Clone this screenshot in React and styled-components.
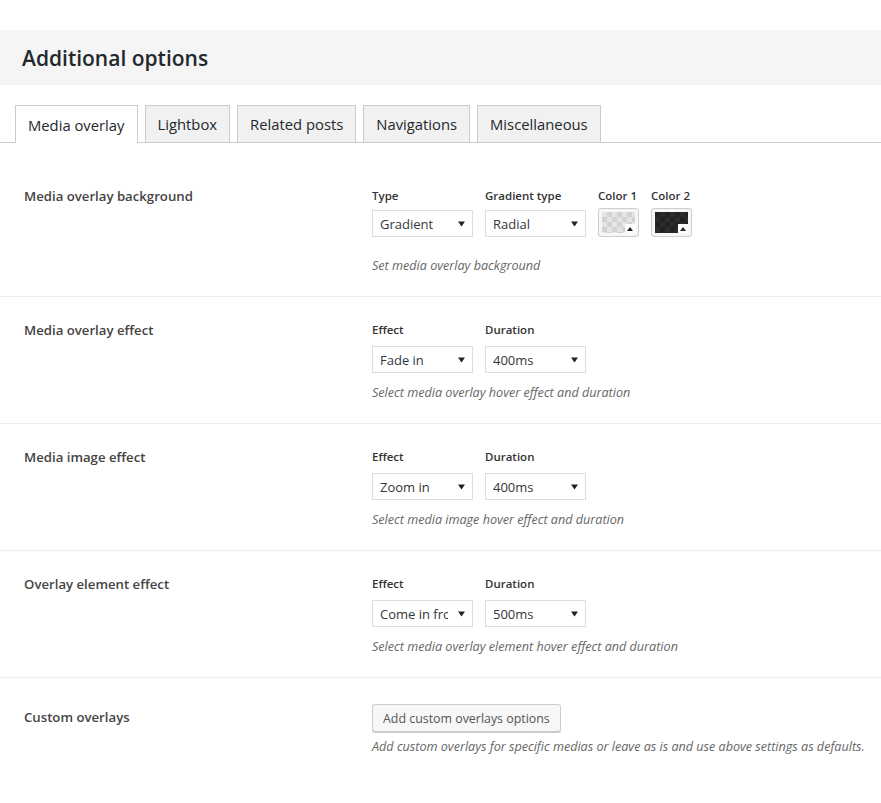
import React from 'react';
import styled, { createGlobalStyle } from 'styled-components';

const GlobalStyle = createGlobalStyle`
    *, *::before, *::after {
        box-sizing: border-box;
    }
    body {
        margin: 0;
        background: #fff;
        font-family: "Open Sans", "Noto Sans", sans-serif;
        color: #444;
    }
`;

const Page = styled.div`
    padding-top: 30px;
`;

const Header = styled.h2`
    margin: 0;
    height: 55px;
    display: flex;
    align-items: center;
    padding-left: 22px;
    background: #f5f5f5;
    font-size: 21px;
    font-weight: 600;
    color: #23282d;
`;

const TabBar = styled.div`
    display: flex;
    gap: 7px;
    margin-top: 20px;
    padding-left: 15px;
    border-bottom: 1px solid #ccc;
`;

const Tab = styled.div`
    display: flex;
    align-items: center;
    padding: 0 12px;
    border: 1px solid #ccc;
    border-bottom: none;
    margin-bottom: ${p => (p.$active ? '-1px' : '0')};
    background: ${p => (p.$active ? '#fff' : '#f1f1f1')};
    height: ${p => (p.$active ? '38px' : '37px')};
    font-size: 14.8px;
    color: #23282d;
`;

const Rows = styled.div`
    padding-top: 20px;
`;

const Row = styled.div`
    display: grid;
    grid-template-columns: 348px 1fr;
    padding: ${p => p.$top || 24}px 0 ${p => p.$bottom || 21}px 24px;
    border-bottom: ${p => (p.$last ? 'none' : '1px solid #eee')};
`;

const RowLabel = styled.div`
    font-size: 13.2px;
    font-weight: 600;
    line-height: 18px;
    color: #444;
    padding-top: ${p => p.$offset || 0}px;
`;

const Fields = styled.div`
    display: flex;
    gap: 12px;
`;

const Field = styled.div`
    display: flex;
    flex-direction: column;
    gap: ${p => p.$gap || 7}px;
`;

const FieldLabel = styled.div`
    font-size: 11.5px;
    font-weight: 600;
    line-height: 18px;
    color: #333;
`;

const SelectBox = styled.div`
    width: 101px;
    height: 27px;
    display: flex;
    align-items: center;
    border: 1px solid #ddd;
    background: #fff;
    padding: 0 7px 0 7px;
    font-size: 13px;
    color: #32373c;
`;

const SelectText = styled.span`
    flex: 1;
    overflow: hidden;
    white-space: nowrap;
    margin-right: 10px;
`;

const Swatch = styled.div`
    position: relative;
    width: 41px;
    height: 29px;
    padding: 3px;
    border: 1px solid #ccc;
    border-radius: 3px;
    background: #f7f7f7;
`;

const SwatchFill = styled.div`
    width: 100%;
    height: 100%;
    background-color: ${p => (p.$dark ? '#222' : '#e4e4e4')};
    background-image:
        linear-gradient(45deg, ${p => (p.$dark ? '#2c2c2c' : '#d2d2d2')} 25%, transparent 25%, transparent 75%, ${p => (p.$dark ? '#2c2c2c' : '#d2d2d2')} 75%),
        linear-gradient(45deg, ${p => (p.$dark ? '#2c2c2c' : '#d2d2d2')} 25%, transparent 25%, transparent 75%, ${p => (p.$dark ? '#2c2c2c' : '#d2d2d2')} 75%);
    background-size: 10px 10px;
    background-position: 0 0, 5px 5px;
`;

const SwatchToggle = styled.div`
    position: absolute;
    right: 3px;
    bottom: 3px;
    width: 10px;
    height: 9px;
    background: #fff;
    display: flex;
    align-items: center;
    justify-content: center;
`;

const Description = styled.p`
    margin: ${p => p.$gap || 11}px 0 0;
    font-size: 12.6px;
    font-style: italic;
    line-height: 18px;
    color: #666;
`;

const Button = styled.button`
    height: 28px;
    padding: 0 10px;
    border: 1px solid #ccc;
    border-radius: 3px;
    background: #f7f7f7;
    box-shadow: 0 1px 0 #ccc;
    font-family: inherit;
    font-size: 12.4px;
    color: #555;
`;

const Arrow = () => (
    <svg width="7" height="6" viewBox="0 0 7 6">
        <path d="M0 0.5 L7 0.5 L3.5 5.5 Z" fill="#222" />
    </svg>
);

const Select = ({ value }) => (
    <SelectBox>
        <SelectText>{value}</SelectText>
        <Arrow />
    </SelectBox>
);

const ColorPicker = ({ dark }) => (
    <Swatch>
        <SwatchFill $dark={dark} />
        <SwatchToggle>
            <svg width="6" height="4" viewBox="0 0 6 4">
                <path d="M0 4 L3 0 L6 4 Z" fill="#222" />
            </svg>
        </SwatchToggle>
    </Swatch>
);

const effectRows = [
    { label: 'Media overlay effect', effect: 'Fade in', duration: '400ms', desc: 'Select media overlay hover effect and duration' },
    { label: 'Media image effect', effect: 'Zoom in', duration: '400ms', desc: 'Select media image hover effect and duration' },
    { label: 'Overlay element effect', effect: 'Come in from bottom', duration: '500ms', desc: 'Select media overlay element hover effect and duration' },
];

const tabs = ['Media overlay', 'Lightbox', 'Related posts', 'Navigations', 'Miscellaneous'];

export default function App() {
    return (
        <Page>
            <GlobalStyle />
            <Header>Additional options</Header>
            <TabBar>
                {tabs.map((t, i) => (
                    <Tab key={t} $active={i === 0}>{t}</Tab>
                ))}
            </TabBar>
            <Rows>
                <Row>
                    <RowLabel>Media overlay background</RowLabel>
                    <div>
                        <Fields>
                            <Field $gap={5}>
                                <FieldLabel>Type</FieldLabel>
                                <Select value="Gradient" />
                            </Field>
                            <Field $gap={5}>
                                <FieldLabel>Gradient type</FieldLabel>
                                <Select value="Radial" />
                            </Field>
                            <Field $gap={3}>
                                <FieldLabel>Color 1</FieldLabel>
                                <ColorPicker />
                            </Field>
                            <Field $gap={3}>
                                <FieldLabel>Color 2</FieldLabel>
                                <ColorPicker dark />
                            </Field>
                        </Fields>
                        <Description $gap={20}>Set media overlay background</Description>
                    </div>
                </Row>
                {effectRows.map(r => (
                    <Row key={r.label}>
                        <RowLabel>{r.label}</RowLabel>
                        <div>
                            <Fields>
                                <Field>
                                    <FieldLabel>Effect</FieldLabel>
                                    <Select value={r.effect} />
                                </Field>
                                <Field>
                                    <FieldLabel>Duration</FieldLabel>
                                    <Select value={r.duration} />
                                </Field>
                            </Fields>
                            <Description>{r.desc}</Description>
                        </div>
                    </Row>
                ))}
                <Row $top={26} $last>
                    <RowLabel $offset={4}>Custom overlays</RowLabel>
                    <div>
                        <Button>Add custom overlays options</Button>
                        <Description $gap={6}>
                            Add custom overlays for specific medias or leave as is and use above settings as defaults.
                        </Description>
                    </div>
                </Row>
            </Rows>
        </Page>
    );
}
